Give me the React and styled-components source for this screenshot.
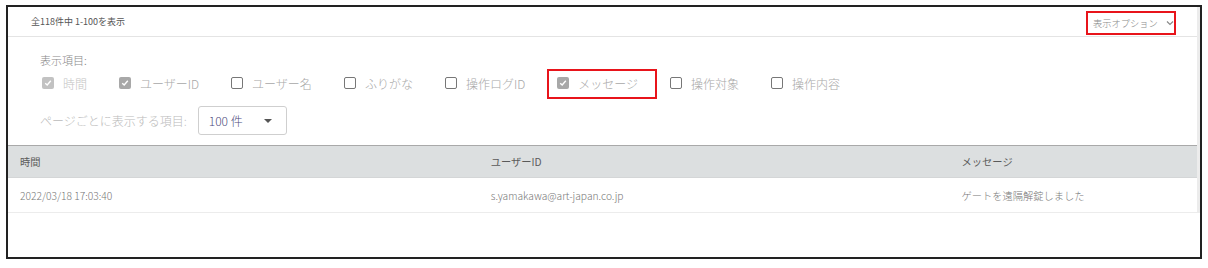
import React from 'react';
import styled, { createGlobalStyle } from 'styled-components';

const GlobalStyle = createGlobalStyle`
  body {
    margin: 0;
    background: #ffffff;
    font-family: 'Noto Sans CJK JP', 'Noto Sans', sans-serif;
  }
`;

// Styled components
const Frame = styled.div`
  box-sizing: border-box;
  margin: 5px 0 0 6px;
  width: 1196px;
  height: 254px;
  border: 2px solid #222;
  background: #fff;
`;

const Panel = styled.div`
  border-right: 3px solid #ececec;
`;

const TopBar = styled.div`
  display: flex;
  align-items: center;
  justify-content: space-between;
  height: 29px;
  padding: 0 21px 0 23px;
  border-bottom: 1px solid #e4e4e4;
`;

const Count = styled.span`
  font-size: 9px;
  color: #555;
`;

const OptionButton = styled.div`
  box-sizing: border-box;
  display: flex;
  align-items: center;
  gap: 8px;
  width: 90px;
  height: 24px;
  margin-top: 2px;
  padding-left: 5px;
  border: 2px solid #e8141b;
  font-size: 9.25px;
  font-weight: 300;
  color: #8a8a8a;
  white-space: nowrap;
`;

const OptionsArea = styled.div`
  padding: 14px 0 10px 32px;
`;

const SectionLabel = styled.div`
  font-size: 11px;
  font-weight: 300;
  line-height: 18px;
  color: #888;
`;

const CheckRow = styled.div`
  display: flex;
  align-items: center;
  gap: 32px;
  height: 18px;
  margin-top: 5px;
  padding-left: 2px;
`;

const CheckItem = styled.label`
  position: relative;
  display: flex;
  align-items: center;
  gap: 9px;
  font-size: 12px;
  font-weight: 300;
  color: ${(p) => (p.disabled ? '#c4c4c4' : '#a8a8a8')};

  ${(p) =>
    p.highlighted &&
    `
    &::after {
      content: '';
      position: absolute;
      top: -6px;
      bottom: -7px;
      left: -10px;
      right: -19px;
      border: 2px solid #e8141b;
    }
  `}
`;

const Box = styled.span`
  box-sizing: border-box;
  display: flex;
  align-items: center;
  justify-content: center;
  width: 12px;
  height: 12px;
  border-radius: 2px;
  border: ${(p) => (p.checked ? 'none' : '1.5px solid #777')};
  background: ${(p) => (p.checked ? (p.disabled ? '#c2c2c2' : '#a8a8a8') : '#fff')};
`;

const PerPageRow = styled.div`
  display: flex;
  align-items: center;
  gap: 11px;
  margin-top: 14px;
`;

const PerPageLabel = styled.span`
  font-size: 12px;
  font-weight: 300;
  color: #bbb;
`;

const Select = styled.div`
  box-sizing: border-box;
  display: flex;
  align-items: center;
  justify-content: space-between;
  width: 89px;
  height: 29px;
  padding: 0 14px 0 10px;
  border: 1px solid #cfcfcf;
  border-radius: 3px;
  font-size: 12px;
  font-weight: 300;
  color: #4d4b7c;
`;

const Caret = styled.span`
  width: 0;
  height: 0;
  border-left: 4px solid transparent;
  border-right: 4px solid transparent;
  border-top: 4px solid #555;
`;

const Table = styled.div`
  border-top: 1px solid #a9a9a9;
`;

const Row = styled.div`
  display: grid;
  grid-template-columns: 2fr 2fr 1fr;
  align-items: center;
  height: ${(p) => (p.head ? '31px' : '34px')};
  padding-left: 12px;
  background: ${(p) => (p.head ? '#dcdfe0' : '#fff')};
  border-bottom: 1px solid ${(p) => (p.head ? '#d4d6d7' : '#ececec')};
  font-size: 10.25px;
  font-weight: ${(p) => (p.head ? 400 : 300)};
  color: ${(p) => (p.head ? '#5a5a5a' : '#777')};
`;

const Check = () => (
  <svg width="8" height="8" viewBox="0 0 8 8">
    <path d="M1.2 4.2 L3.2 6 L6.8 1.8" fill="none" stroke="#fff" strokeWidth="1.4" />
  </svg>
);

const Chevron = () => (
  <svg width="8" height="6" viewBox="0 0 8 6">
    <path d="M1 1.5 L4 4.5 L7 1.5" fill="none" stroke="#888" strokeWidth="1.2" />
  </svg>
);

const columns = [
  { label: '時間', checked: true, disabled: true },
  { label: 'ユーザーID', checked: true },
  { label: 'ユーザー名' },
  { label: 'ふりがな' },
  { label: '操作ログID' },
  { label: 'メッセージ', checked: true, highlighted: true },
  { label: '操作対象' },
  { label: '操作内容' },
];

const rows = [
  ['2022/03/18 17:03:40', 's.yamakawa@art-japan.co.jp', 'ゲートを遠隔解錠しました'],
];

const App = () => (
  <>
    <GlobalStyle />
    <Frame>
      <Panel>
        <TopBar>
          <Count>全118件中 1-100を表示</Count>
          <OptionButton>
            表示オプション
            <Chevron />
          </OptionButton>
        </TopBar>
        <OptionsArea>
          <SectionLabel>表示項目:</SectionLabel>
          <CheckRow>
            {columns.map((c) => (
              <CheckItem key={c.label} disabled={c.disabled} highlighted={c.highlighted}>
                <Box checked={c.checked} disabled={c.disabled}>
                  {c.checked && <Check />}
                </Box>
                {c.label}
              </CheckItem>
            ))}
          </CheckRow>
          <PerPageRow>
            <PerPageLabel>ページごとに表示する項目:</PerPageLabel>
            <Select>
              100 件
              <Caret />
            </Select>
          </PerPageRow>
        </OptionsArea>
        <Table>
          <Row head>
            <span>時間</span>
            <span>ユーザーID</span>
            <span>メッセージ</span>
          </Row>
          {rows.map((r) => (
            <Row key={r[0]}>
              {r.map((cell) => (
                <span key={cell}>{cell}</span>
              ))}
            </Row>
          ))}
        </Table>
      </Panel>
    </Frame>
  </>
);

export default App;
